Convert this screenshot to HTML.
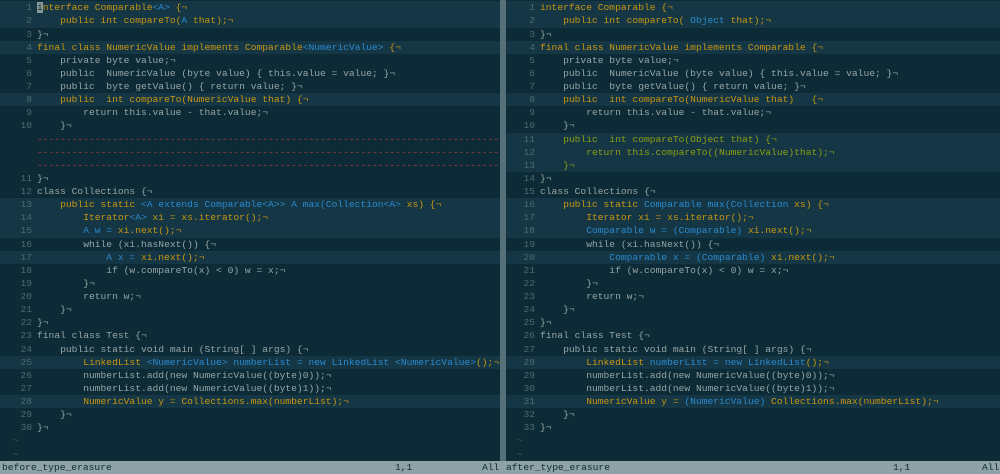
<!DOCTYPE html>
<html><head><meta charset="utf-8"><style>
*{margin:0;padding:0;box-sizing:border-box}
body{width:1000px;height:474px;background:#0c2b36;overflow:hidden;position:relative;font-family:"Liberation Mono",monospace;font-size:9.65px;}
.pane{position:absolute;top:1.3px;overflow:hidden}
#L{left:0;width:500px}
#R{left:506px;width:494px}
#sep{position:absolute;left:500px;top:0;width:6px;height:461px;background:#56707a}
.r{height:13.125px;line-height:13.125px;white-space:pre;position:relative;color:#95a5a6;padding-left:37px;overflow:hidden}
#R .r{padding-left:34px}
.r.c{background:#143645}
.n{position:absolute;left:0;width:32px;text-align:right;color:#4d6a73}
#R .n{width:29px}
.o{color:#c89610}.b{color:#2b8ad0}.g{color:#8c9e12}
.d{color:#b03a3a}
.t{color:#3f5a63;padding-left:13px}
#R .t{padding-left:11px}
.cur{background:#8a9a9b;color:#0c2b36}
#st{position:absolute;left:0;top:461px;width:1000px;height:13px;background:#8fa2a6;color:#0b2a35;white-space:pre;line-height:13px}
#st span{position:absolute;top:0}
</style></head><body>
<div id="L" class="pane">
<div class="r c"><span class="n">1</span><span class="o"><span class="cur">i</span>nterface Comparable</span><span class="b">&lt;A&gt;</span><span class="o"> {¬</span></div>
<div class="r c"><span class="n">2</span><span class="o">    public int compareTo(</span><span class="b">A</span><span class="o"> that);¬</span></div>
<div class="r"><span class="n">3</span>}¬</div>
<div class="r c"><span class="n">4</span><span class="o">final class NumericValue implements Comparable</span><span class="b">&lt;NumericValue&gt;</span><span class="o"> {¬</span></div>
<div class="r"><span class="n">5</span>    private byte value;¬</div>
<div class="r"><span class="n">6</span>    public  NumericValue (byte value) { this.value = value; }¬</div>
<div class="r"><span class="n">7</span>    public  byte getValue() { return value; }¬</div>
<div class="r c"><span class="n">8</span><span class="o">    public  int compareTo(NumericValue that) {¬</span></div>
<div class="r"><span class="n">9</span>        return this.value - that.value;¬</div>
<div class="r"><span class="n">10</span>    }¬</div>
<div class="r d">--------------------------------------------------------------------------------------------</div>
<div class="r d">--------------------------------------------------------------------------------------------</div>
<div class="r d">--------------------------------------------------------------------------------------------</div>
<div class="r"><span class="n">11</span>}¬</div>
<div class="r"><span class="n">12</span>class Collections {¬</div>
<div class="r c"><span class="n">13</span><span class="o">    public static </span><span class="b">&lt;A extends Comparable&lt;A&gt;&gt; A max(Collection&lt;A&gt;</span><span class="o"> xs) {¬</span></div>
<div class="r c"><span class="n">14</span><span class="o">        Iterator</span><span class="b">&lt;A&gt;</span><span class="o"> xi = xs.iterator();¬</span></div>
<div class="r c"><span class="n">15</span><span class="b">        A w =</span><span class="o"> xi.next();¬</span></div>
<div class="r"><span class="n">16</span>        while (xi.hasNext()) {¬</div>
<div class="r c"><span class="n">17</span><span class="b">            A x =</span><span class="o"> xi.next();¬</span></div>
<div class="r"><span class="n">18</span>            if (w.compareTo(x) &lt; 0) w = x;¬</div>
<div class="r"><span class="n">19</span>        }¬</div>
<div class="r"><span class="n">20</span>        return w;¬</div>
<div class="r"><span class="n">21</span>    }¬</div>
<div class="r"><span class="n">22</span>}¬</div>
<div class="r"><span class="n">23</span>final class Test {¬</div>
<div class="r"><span class="n">24</span>    public static void main (String[ ] args) {¬</div>
<div class="r c"><span class="n">25</span><span class="o">        LinkedList</span><span class="b"> &lt;NumericValue&gt; numberList = new LinkedList &lt;NumericValue&gt;</span><span class="o">();¬</span></div>
<div class="r"><span class="n">26</span>        numberList.add(new NumericValue((byte)0));¬</div>
<div class="r"><span class="n">27</span>        numberList.add(new NumericValue((byte)1));¬</div>
<div class="r c"><span class="n">28</span><span class="o">        NumericValue y = Collections.max(numberList);¬</span></div>
<div class="r"><span class="n">29</span>    }¬</div>
<div class="r"><span class="n">30</span>}¬</div>
<div class="r t">~</div>
<div class="r t">~</div>
</div>
<div id="sep"></div>
<div id="R" class="pane">
<div class="r c"><span class="n">1</span><span class="o">interface Comparable {¬</span></div>
<div class="r c"><span class="n">2</span><span class="o">    public int compareTo(</span><span class="b"> Object</span><span class="o"> that);¬</span></div>
<div class="r"><span class="n">3</span>}¬</div>
<div class="r c"><span class="n">4</span><span class="o">final class NumericValue implements Comparable {¬</span></div>
<div class="r"><span class="n">5</span>    private byte value;¬</div>
<div class="r"><span class="n">6</span>    public  NumericValue (byte value) { this.value = value; }¬</div>
<div class="r"><span class="n">7</span>    public  byte getValue() { return value; }¬</div>
<div class="r c"><span class="n">8</span><span class="o">    public  int compareTo(NumericValue that)   {¬</span></div>
<div class="r"><span class="n">9</span>        return this.value - that.value;¬</div>
<div class="r"><span class="n">10</span>    }¬</div>
<div class="r c"><span class="n">11</span><span class="g">    public  int compareTo(Object that) {¬</span></div>
<div class="r c"><span class="n">12</span><span class="g">        return this.compareTo((NumericValue)that);¬</span></div>
<div class="r c"><span class="n">13</span><span class="g">    }¬</span></div>
<div class="r"><span class="n">14</span>}¬</div>
<div class="r"><span class="n">15</span>class Collections {¬</div>
<div class="r c"><span class="n">16</span><span class="o">    public static </span><span class="b">Comparable max(Collection</span><span class="o"> xs) {¬</span></div>
<div class="r c"><span class="n">17</span><span class="o">        Iterator xi = xs.iterator();¬</span></div>
<div class="r c"><span class="n">18</span><span class="b">        Comparable w = (Comparable)</span><span class="o"> xi.next();¬</span></div>
<div class="r"><span class="n">19</span>        while (xi.hasNext()) {¬</div>
<div class="r c"><span class="n">20</span><span class="b">            Comparable x = (Comparable)</span><span class="o"> xi.next();¬</span></div>
<div class="r"><span class="n">21</span>            if (w.compareTo(x) &lt; 0) w = x;¬</div>
<div class="r"><span class="n">22</span>        }¬</div>
<div class="r"><span class="n">23</span>        return w;¬</div>
<div class="r"><span class="n">24</span>    }¬</div>
<div class="r"><span class="n">25</span>}¬</div>
<div class="r"><span class="n">26</span>final class Test {¬</div>
<div class="r"><span class="n">27</span>    public static void main (String[ ] args) {¬</div>
<div class="r c"><span class="n">28</span><span class="o">        LinkedList</span><span class="b"> numberList = new LinkedList</span><span class="o">();¬</span></div>
<div class="r"><span class="n">29</span>        numberList.add(new NumericValue((byte)0));¬</div>
<div class="r"><span class="n">30</span>        numberList.add(new NumericValue((byte)1));¬</div>
<div class="r c"><span class="n">31</span><span class="o">        NumericValue y = </span><span class="b">(NumericValue)</span><span class="o"> Collections.max(numberList);¬</span></div>
<div class="r"><span class="n">32</span>    }¬</div>
<div class="r"><span class="n">33</span>}¬</div>
<div class="r t">~</div>
<div class="r t">~</div>
</div>
<div id="st">
<span style="left:2px">before_type_erasure</span>
<span style="left:395px">1,1</span>
<span style="left:482px">All</span>
<span style="left:506px">after_type_erasure</span>
<span style="left:893px">1,1</span>
<span style="left:982px">All</span>
</div>
</body></html>
